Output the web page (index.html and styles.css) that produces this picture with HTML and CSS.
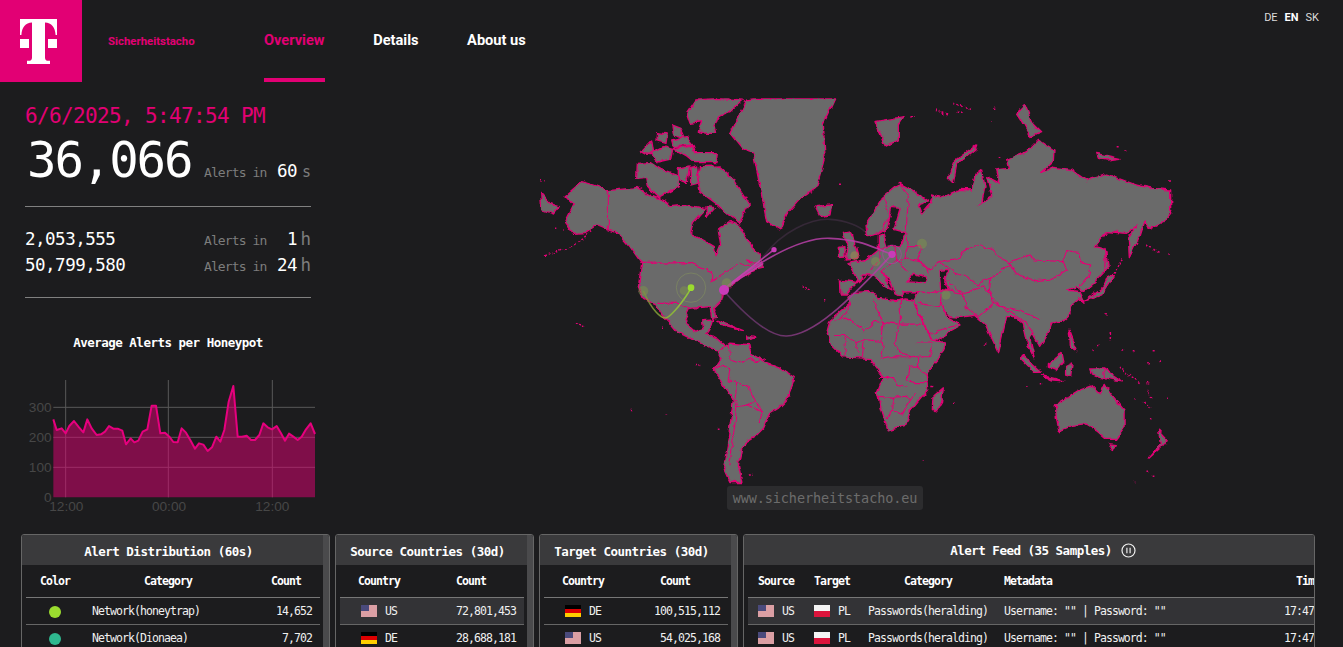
FILE: index.html
```html
<!DOCTYPE html>
<html lang="en">
<head>
    <meta charset="UTF-8">
    <meta name="viewport" content="width=device-width, initial-scale=1.0">
    <title>Sicherheitstacho</title>
    <link rel="stylesheet" href="styles.css">
</head>
<body>

    <svg class="defs" width="0" height="0">
        <symbol id="flag-us" viewBox="0 0 16 12">
            <rect width="16" height="12" fill="#eee"/>
            <path d="M0 1h16M0 3h16M0 5h16M0 7h16M0 9h16M0 11h16" stroke="#c8505a" stroke-width="1"/>
            <rect width="8" height="6" fill="#4a4a7c"/>
        </symbol>
        <symbol id="flag-de" viewBox="0 0 16 12">
            <rect width="16" height="4" fill="#000"/>
            <rect y="4" width="16" height="4" fill="#dd0000"/>
            <rect y="8" width="16" height="4" fill="#ffce00"/>
        </symbol>
        <symbol id="flag-pl" viewBox="0 0 16 12">
            <rect width="16" height="6" fill="#f4f4f4"/>
            <rect y="6" width="16" height="6" fill="#dc143c"/>
        </symbol>
    </svg>

    <header class="topbar">
        <a class="logo">
            <svg width="82" height="82" viewBox="0 0 82 82">
                <path fill="#fff" d="M20 19H57V35H55.6C55.2 27.5 51.5 23 45 22.6V57.5C45 60 46 60.8 48.5 60.8H50V64H27V60.8H28.5C31 60.8 32 60 32 57.5V22.6C25.5 23 21.8 27.5 21.4 35H20Z"/>
                <rect x="20" y="39" width="9" height="9" fill="#fff"/>
                <rect x="48" y="39" width="9" height="9" fill="#fff"/>
            </svg>
        </a>
        <span class="brand">Sicherheitstacho</span>
        <nav class="nav">
            <a class="nav-item active">Overview</a>
            <a class="nav-item">Details</a>
            <a class="nav-item">About us</a>
        </nav>
        <div class="langs"><span>DE</span><span class="on">EN</span><span>SK</span></div>
    </header>

    <main class="main">
        <section class="left">
            <div class="stats">
                <div class="clock">6/6/2025, 5:47:54 PM</div>
                <div class="stat-row big">
                    <span class="num">36,066</span><span class="lbl">Alerts in</span><span class="val">60</span><span class="unit small-unit">s</span>
                </div>
                <hr class="rule">
                <div class="stat-rows">
                    <div class="stat-row">
                        <span class="num">2,053,555</span><span class="lbl">Alerts in</span><span class="val">1</span><span class="unit">h</span>
                    </div>
                    <div class="stat-row">
                        <span class="num">50,799,580</span><span class="lbl">Alerts in</span><span class="val">24</span><span class="unit">h</span>
                    </div>
                </div>
                <hr class="rule">
            </div>
            <h3 class="chart-title">Average Alerts per Honeypot</h3>
            <svg class="chart" width="330" height="155" viewBox="0 135 990 465">
                <g class="grid">
                    <path d="M160 262H945M160 352H945M160 442H945M197 180V532M505 180V532M817 180V532"/>
                </g>
                <path class="area" d="M160 298L170 330 185 325 197 340 208 318 222 303 237 322 250 337 262 298 275 325 290 345 303 343 315 335 327 318 340 326 353 326 367 332 378 373 392 355 403 367 415 362 428 335 442 328 455 257 468 257 481 340 495 338 508 350 520 366 533 367 545 325 558 338 572 362 585 386 597 370 610 374 623 393 636 382 649 350 661 365 673 330 686 245 700 198 713 350 726 350 740 347 753 360 765 360 778 345 790 310 803 322 816 328 830 318 843 340 855 362 867 341 880 350 893 360 905 350 918 328 932 310 945 342V532H160Z"/>
                <path class="line" d="M160 298L170 330 185 325 197 340 208 318 222 303 237 322 250 337 262 298 275 325 290 345 303 343 315 335 327 318 340 326 353 326 367 332 378 373 392 355 403 367 415 362 428 335 442 328 455 257 468 257 481 340 495 338 508 350 520 366 533 367 545 325 558 338 572 362 585 386 597 370 610 374 623 393 636 382 649 350 661 365 673 330 686 245 700 198 713 350 726 350 740 347 753 360 765 360 778 345 790 310 803 322 816 328 830 318 843 340 855 362 867 341 880 350 893 360 905 350 918 328 932 310 945 342"/>
                <g class="ticks">
                    <text x="155" y="277" text-anchor="end">300</text>
                    <text x="155" y="367" text-anchor="end">200</text>
                    <text x="155" y="457" text-anchor="end">100</text>
                    <text x="155" y="547" text-anchor="end">0</text>
                    <text x="199" y="574" text-anchor="middle">12:00</text>
                    <text x="507" y="574" text-anchor="middle">00:00</text>
                    <text x="817" y="574" text-anchor="middle">12:00</text>
                </g>
            </svg>
        </section>

        <section class="map-wrap">
            <svg class="map" width="650" height="420" viewBox="0 0 1950 1260">
                <defs>
                    <clipPath id="map-clip"><rect x="-100" y="25" width="2100" height="1300"/></clipPath>
                    <filter id="rough" filterUnits="userSpaceOnUse" x="-100" y="0" width="2200" height="1300">
                        <feTurbulence type="fractalNoise" baseFrequency=".04" numOctaves="3" seed="4"/>
                        <feDisplacementMap in="SourceGraphic" scale="16" xChannelSelector="R" yChannelSelector="G"/>
                    </filter>
                    <linearGradient id="arc-green" x1="0" x2="1" y1="0" y2="0">
                        <stop offset="0" stop-color="#7f8f3a"/>
                        <stop offset="1" stop-color="#9bdc2f"/>
                    </linearGradient>
                    <linearGradient id="arc-low" x1="0" x2="1" y1="0" y2="0">
                        <stop offset="0" stop-color="#5a3560"/>
                        <stop offset="1" stop-color="#b93fa8"/>
                    </linearGradient>
                </defs>
                <g clip-path="url(#map-clip)">
                    <g filter="url(#rough)">
                        <!-- north america -->
                        <g class="land">
                            <polygon points="105,318 155,275 190,285 235,302 300,295 320,292 365,318 410,335 425,350 470,345 525,355 490,395 482,430 520,450 553,470 558,500 572,465 565,420 585,405 600,395 625,405 668,475 688,495 700,535 660,545 625,570 600,590 580,610 575,630 550,655 558,682 545,685 540,650 480,655 465,685 472,705 495,725 520,715 518,692 548,690 540,715 530,730 565,750 600,782 560,782 530,768 490,750 440,725 420,700 400,680 375,640 340,625 325,590 335,520 300,470 265,430 235,420 200,405 165,428 130,430 105,395 130,345"/>
                            <polygon points="650,30 670,25 915,25 880,100 885,200 860,290 810,325 770,370 750,420 710,395 690,290 670,190 640,180 600,130 640,50"/>
                            <polygon points="470,70 497,30 560,25 640,30 600,65 575,75 555,105 560,130 530,130 505,125 515,95 480,100"/>
                            <polygon points="425,105 450,115 462,142 430,132"/>
                            <polygon points="332,185 365,150 372,195 345,192"/>
                            <polygon points="322,220 362,218 392,238 445,258 445,290 385,322 355,292 350,262 320,265"/>
                            <polygon points="360,190 400,170 428,178 422,208 385,216"/>
                            <polygon points="430,175 490,168 497,188 562,188 558,218 495,218 470,198"/>
                            <polygon points="508,230 568,228 612,268 658,342 628,398 600,378 560,342 510,305 503,262"/>
                            <polygon points="445,235 478,228 472,278 445,268"/>
                            <polygon points="480,232 500,228 505,282 482,288"/>
                            <polygon points="425,150 470,140 490,165 430,170"/>
                            <polygon points="380,128 412,132 408,160 378,152"/>
                            <polygon points="528,350 556,353 530,382"/>
                            <polygon points="32,310 60,340 88,350 70,372 35,360"/>
                            <polygon points="855,350 905,345 900,375 870,380"/>
                            <polygon points="940,430 965,425 985,505 945,510 955,470"/>
                            <polygon points="925,472 945,470 945,498 925,500"/>
                            <polygon points="560,690 640,722 605,714 570,705"/>
                            <polygon points="650,735 680,740 650,748"/>
                            <polygon points="650,510 690,520 680,535"/>
                        </g>
                        <polyline class="border" points="235,302 235,420"/>
                        <polyline class="border" points="335,520 480,518 545,545 545,575 625,520 660,530"/>
                        <polyline class="border" points="385,640 440,640 480,655"/>
                        <path class="isles" d="M45 497L100 480 150 455 185 420M30 272h14M75 415h4M100 420h5M135 697L160 710M395 715h4M815 590L845 605M885 632h4M930 280h6"/>

                        <!-- eurasia, drawn from the second crop -->
                        <g transform="translate(960 0)">
                            <g class="land">
                                <polygon points="-30,612 -32,570 25,578 -6,520 50,508 88,478 88,437 100,432 110,470 150,467 168,428 132,418 150,355 125,352 112,415 85,432 50,440 45,410 65,378 100,320 150,280 195,305 235,335 205,345 215,372 240,342 250,315 275,322 330,298 365,300 375,255 395,240 405,290 395,340 385,345 425,320 410,260 450,280 440,240 475,235 470,210 530,185 565,148 612,180 610,215 575,248 610,232 660,238 710,272 770,252 860,285 910,295 962,300 962,370 945,392 900,415 882,395 868,440 838,503 835,445 862,405 830,430 770,425 735,470 765,478 768,540 745,565 700,605 680,590 650,600 690,605 705,640 690,625 660,650 660,672 640,690 605,700 595,728 569,769 549,733 540,745 554,806 535,770 520,700 495,680 470,680 445,790 404,702 373,676 330,682 300,680 275,650 292,682 325,700 333,708 250,755 205,665 192,632 205,605 158,606 155,622 135,612 125,580 95,545 126,600 105,590 69,555 30,555 35,565 8,592 -8,612"/>
                                <polygon points="75,95 160,80 145,105 145,150 105,170"/>
                                <polygon points="295,265 310,215 380,165 375,180 320,225 310,280"/>
                                <polygon points="500,70 525,45 545,95 575,125 540,140 510,85"/>
                                <polygon points="740,190 810,205 770,210 745,205"/>
                                <polygon points="765,475 775,530 765,545"/>
                                <polygon points="775,555 790,560 755,615 700,635 720,620 760,590"/>
                            </g>
                            <polygon class="sea" points="171,576 190,550 231,562 225,578"/>
                            <polygon class="sea" points="270,545 295,540 285,565 295,600 275,595"/>
                            <polyline class="border" points="265,515 330,505 340,480 385,465 430,480 445,500 480,520 450,550 420,560 385,585 350,560 315,550 290,530 265,515"/>
                            <polyline class="border" points="480,518 540,495 555,510 640,515 650,485 685,490 695,520 725,525 715,560 690,590"/>
                            <polyline class="border" points="640,515 650,540 600,570 560,575 495,550 480,520"/>
                            <polyline class="border" points="420,560 415,610 450,650 510,660 570,690"/>
                            <polyline class="border" points="275,600 340,610 345,650 385,680"/>
                            <polyline class="border" points="205,605 250,610 275,600 270,650"/>
                            <polyline class="border" points="340,610 400,590 420,610 430,640 385,680"/>
                            <polyline class="border" points="295,575 340,610"/>
                            <polyline class="border" points="205,640 270,650"/>
                            <polyline class="border" points="240,730 320,705"/>
                            <polyline class="border" points="430,640 490,670 530,700 549,733"/>
                            <polyline class="border" points="265,515 240,540 200,510 215,470 175,470 170,430"/>
                            <polyline class="border" points="175,470 165,505 225,520 235,550"/>
                            <polyline class="border" points="110,470 90,478 90,510 65,540"/>
                            <polyline class="border" points="135,470 140,510 165,505"/>
                            <polyline class="border" points="95,545 140,510 175,545"/>
                            <polyline class="border" points="25,578 50,555"/>
                            <polyline class="border" points="100,320 120,380 85,432"/>
                            <polyline class="border" points="150,280 175,320 170,400 168,428"/>
                            <path class="isles" d="M255 60L295 75M310 40L360 55M320 70h20M420 95h6M430 55h6M180 80h14M445 200h6M800 170h6M820 180h6M890 465L930 490M955 495h10M960 270V282M820 505L785 560"/>
                        </g>

                        <!-- africa, south america, australia -->
                        <g transform="translate(300 630) scale(1.033)">
                            <g class="land">
                                <polygon points="262,145 290,125 345,130 350,155 400,185 440,200 480,225 455,290 430,315 405,330 385,375 365,395 340,410 325,430 315,480 325,530 290,530 272,490 283,420 300,290 250,215 245,205 262,180"/>
                                <polygon points="570,100 582,55 640,10 632,-10 650,-22 706,-25 720,-5 775,2 800,-3 828,2 828,20 875,115 915,125 895,175 860,215 865,260 835,295 815,320 800,365 750,380 725,300 718,270 735,225 705,185 700,170 620,165 585,130"/>
                                <polygon points="910,255 905,300 890,325 878,315 880,280"/>
                                <polygon points="1235,305 1300,265 1340,250 1365,275 1380,245 1395,270 1435,320 1435,370 1410,405 1385,405 1355,380 1320,360 1280,365 1245,380 1238,340"/>
                                <polygon points="1392,418 1410,420 1403,440"/>
                                <polygon points="1535,378 1560,405 1545,425 1505,462 1540,420"/>
                                <polygon points="1140,160 1195,210 1175,210 1135,170"/>
                                <polygon points="1195,220 1260,235 1220,232"/>
                                <polygon points="1215,185 1255,155 1260,180 1240,205 1215,195"/>
                                <polygon points="1335,200 1375,200 1430,235 1395,230 1375,225 1340,215"/>
                                <polygon points="1265,190 1285,180 1280,220 1265,215"/>
                                <polygon points="1275,85 1300,150 1280,140"/>
                            </g>
                            <polyline class="border" points="285,130 290,170 320,180 350,165 365,180 395,170"/>
                            <polyline class="border" points="245,205 270,190 290,200 285,235 310,240 345,255 365,295 385,325 375,355"/>
                            <polyline class="border" points="310,240 305,290 310,310 340,305 365,295"/>
                            <polyline class="border" points="310,310 300,400 290,480"/>
                            <polyline class="border" points="340,305 385,325"/>
                            <polyline class="border" points="640,10 620,50 590,60"/>
                            <polyline class="border" points="625,50 680,90 710,62 735,65 730,100 735,140 730,170"/>
                            <polyline class="border" points="705,0 735,65 780,70 770,130 790,155 830,165"/>
                            <polyline class="border" points="785,0 785,70 845,70"/>
                            <polyline class="border" points="590,100 625,100 655,125 680,115 730,120"/>
                            <polyline class="border" points="625,100 625,160"/>
                            <polyline class="border" points="655,125 665,155"/>
                            <polyline class="border" points="680,115 675,165"/>
                            <polyline class="border" points="830,125 880,125 870,165 835,165"/>
                            <polyline class="border" points="735,170 750,165 810,165 835,165 835,195 810,195 805,235 830,240 860,240"/>
                            <polyline class="border" points="720,225 765,225 775,245 805,250"/>
                            <polyline class="border" points="718,280 765,282 800,280 815,290 830,270"/>
                            <polyline class="border" points="765,282 763,320 745,345"/>
                            <polyline class="border" points="763,320 790,335 815,290"/>
                            <polyline class="border" points="835,195 860,215"/>
                            <polyline class="border" points="1375,200 1378,225"/>
                            <path class="isles" d="M190 187h14M100 335h5M5 318h5M255 375h5M345 505h14M850 465h3M875 248h10M940 300h4M1150 250h5M1190 243h4M1030 125h5M1395 90V115M1340 145h5M1430 148h5M1460 150h5M1515 150h10M1540 175V185M1505 185h5M1420 195L1480 240M1505 260L1515 285M1490 295L1510 310M1500 240h5M1465 290h4M1560 285h5M1500 497h5M1515 512h5M1465 530h4M1380 40h5M1355 135h5M1510 345h4"/>
                        </g>
                    </g>

                    <!-- attack arcs -->
                    <path class="arc" stroke="#3a2a3c" d="M690 515C750 420 850 385 900 388S990 410 1005 425"/>
                    <path class="arc" stroke="#b93fa8" d="M582 598C650 540 800 440 900 445S1020 470 1086 493"/>
                    <path class="arc" stroke="url(#arc-low)" d="M582 603C650 680 720 740 770 738C850 735 950 640 1086 493"/>
                    <path class="arc" stroke="#c840b0" d="M590 590L732 479"/>
                    <path class="arc" stroke="#c840b0" d="M600 585L700 520"/>
                    <path class="arc" stroke="url(#arc-green)" d="M340 603C365 660 395 690 410 683S465 630 483 593"/>

                    <g class="spots">
                        <circle cx="340" cy="603" r="15" fill="#7c8f4c"/>
                        <circle cx="462" cy="602" r="13" fill="#7c8f4c"/>
                        <circle cx="590" cy="580" r="15" fill="#7c8f4c"/>
                        <circle cx="1176" cy="461" r="15" fill="#7c8f4c"/>
                        <circle cx="1037" cy="515" r="14" fill="#7c8f4c"/>
                        <circle cx="974" cy="497" r="13" fill="#a08a4c"/>
                        <circle cx="1248" cy="615" r="14" fill="#7c8f4c"/>
                    </g>
                    <circle class="ring" cx="483" cy="593" r="44"/>
                    <circle class="ring pink" cx="1086" cy="493" r="28"/>
                    <circle cx="483" cy="593" r="10" fill="#9bdc2f"/>
                    <circle cx="582" cy="600" r="15" fill="#c83cb8"/>
                    <circle cx="732" cy="479" r="8" fill="#c83cb8"/>
                    <circle cx="1086" cy="493" r="11" fill="#c83cb8"/>
                </g>
            </svg>
            <div class="watermark">www.sicherheitstacho.eu</div>
        </section>
    </main>

    <section class="panels">
        <div class="panel p-dist">
            <div class="panel-col">
                <h4 class="panel-head">Alert Distribution (60s)</h4>
                <div class="panel-body">
                    <table class="tbl">
                        <colgroup><col class="c58"><col class="c168"><col class="c68"></colgroup>
                        <tr><th>Color</th><th>Category</th><th>Count</th></tr>
                        <tr><td class="mid"><i class="dot green"></i></td><td class="pad">Network(honeytrap)</td><td class="num-cell">14,652</td></tr>
                        <tr><td class="mid"><i class="dot teal"></i></td><td class="pad">Network(Dionaea)</td><td class="num-cell">7,702</td></tr>
                    </table>
                </div>
            </div>
            <div class="bar"></div>
        </div>

        <div class="panel p-country">
            <div class="panel-col">
                <h4 class="panel-head">Source Countries (30d)</h4>
                <div class="panel-body">
                    <table class="tbl">
                        <colgroup><col class="c78"><col class="c106"></colgroup>
                        <tr><th>Country</th><th>Count</th></tr>
                        <tr class="hot"><td><span class="cc"><svg class="flag"><use href="#flag-us"/></svg>US</span></td><td class="num-cell">72,801,453</td></tr>
                        <tr><td><span class="cc"><svg class="flag"><use href="#flag-de"/></svg>DE</span></td><td class="num-cell">28,688,181</td></tr>
                    </table>
                </div>
            </div>
            <div class="bar"></div>
        </div>

        <div class="panel p-country">
            <div class="panel-col">
                <h4 class="panel-head">Target Countries (30d)</h4>
                <div class="panel-body">
                    <table class="tbl">
                        <colgroup><col class="c78"><col class="c106"></colgroup>
                        <tr><th>Country</th><th>Count</th></tr>
                        <tr><td><span class="cc"><svg class="flag"><use href="#flag-de"/></svg>DE</span></td><td class="num-cell">100,515,112</td></tr>
                        <tr><td><span class="cc"><svg class="flag"><use href="#flag-us"/></svg>US</span></td><td class="num-cell">54,025,168</td></tr>
                    </table>
                </div>
            </div>
            <div class="bar"></div>
        </div>

        <div class="panel p-feed">
            <div class="panel-col">
                <h4 class="panel-head feed-head">Alert Feed (35 Samples)
                    <svg class="pause" width="15" height="15" viewBox="0 0 15 15">
                        <circle cx="7.5" cy="7.5" r="6.5"/>
                        <path d="M5.9 4.8V10.2M9.1 4.8V10.2"/>
                    </svg>
                </h4>
                <div class="panel-body">
                    <table class="tbl feed">
                        <colgroup><col class="c58"><col class="c54"><col class="c136"><col class="c279"><col class="c66"></colgroup>
                        <tr><th class="left ind10">Source</th><th class="left">Target</th><th>Category</th><th class="left">Metadata</th><th>Time</th></tr>
                        <tr class="hot"><td class="ind10"><span class="cc"><svg class="flag"><use href="#flag-us"/></svg>US</span></td><td class="left"><span class="cc"><svg class="flag"><use href="#flag-pl"/></svg>PL</span></td><td class="pad">Passwords(heralding)</td><td class="pad">Username: "" | Password: ""</td><td class="mid">17:47:54</td></tr>
                        <tr><td class="ind10"><span class="cc"><svg class="flag"><use href="#flag-us"/></svg>US</span></td><td class="left"><span class="cc"><svg class="flag"><use href="#flag-pl"/></svg>PL</span></td><td class="pad">Passwords(heralding)</td><td class="pad">Username: "" | Password: ""</td><td class="mid">17:47:54</td></tr>
                    </table>
                </div>
            </div>
        </div>
    </section>

</body>
</html>
```

FILE: styles.css
```css
html, body {
    height: 100%;
}
body {
    margin: 0;
    background-color: #1c1c1e;
    color: #f2f2f2;
    font-family: "DejaVu Sans Mono", "Liberation Mono", monospace;
    overflow: hidden;
}
.defs {
    position: absolute;
}

/* header */
.topbar {
    display: flex;
    align-items: center;
    height: 82px;
}
.logo {
    display: block;
    width: 82px;
    height: 82px;
    background-color: #e20074;
}
.logo svg {
    display: block;
}
.brand {
    margin-left: 26px;
    width: 156px;
    color: #e20074;
    font-family: Roboto, "Liberation Sans", sans-serif;
    font-size: 11.4px;
    font-weight: 700;
}
.nav {
    display: flex;
    gap: 48.6px;
    height: 82px;
}
.nav-item {
    display: flex;
    align-items: center;
    box-sizing: border-box;
    height: 82px;
    padding-top: 2px;
    border-bottom: 4px solid transparent;
    color: #fff;
    font-family: Roboto, "Liberation Sans", sans-serif;
    font-size: 14.6px;
    font-weight: 700;
}
.nav-item.active {
    color: #e20074;
    border-bottom-color: #e20074;
}
.langs {
    display: flex;
    gap: 7px;
    align-self: flex-start;
    margin-left: auto;
    margin-right: 24px;
    padding-top: 11px;
    color: #ddd;
    font-family: Roboto, "Liberation Sans", sans-serif;
    font-size: 11px;
}
.langs .on {
    color: #fff;
    font-weight: 700;
}

/* main row */
.main {
    display: flex;
    height: 452px;
}
.left {
    width: 330px;
    flex: none;
}
.stats {
    width: 286px;
    margin-left: 25px;
}
.clock {
    margin-top: 22px;
    color: #e20074;
    font-size: 21px;
    line-height: 24px;
    letter-spacing: -.64px;
}
.stat-row {
    display: grid;
    grid-template-columns: 179px 60px 33px 14px;
    align-items: baseline;
    height: 26px;
    line-height: 26px;
}
.stat-row .num, .stat-row .val {
    font-size: 17.5px;
    letter-spacing: -.5px;
    color: #fff;
}
.stat-row .lbl {
    font-size: 13px;
    letter-spacing: -.9px;
    color: #7d7d7d;
    white-space: nowrap;
}
.stat-row .val {
    text-align: right;
}
.stat-row .unit {
    font-size: 17.5px;
    text-align: right;
    color: #7d7d7d;
}
.stat-row .small-unit {
    font-size: 15px;
}
.stat-row.big {
    box-sizing: border-box;
    height: 60px;
    padding-top: 5px;
    line-height: 56px;
}
.stat-row.big .num {
    padding-left: 2px;
    font-size: 49px;
    letter-spacing: -2.1px;
}
.rule {
    height: 1px;
    margin: 18px 0 0;
    border: 0;
    background-color: #808080;
}
.stat-rows {
    padding: 19px 0;
}
.stat-rows + .rule {
    margin-top: 0;
}
.chart-title {
    margin: 35px 0 0;
    padding-left: 6px;
    font-size: 12.5px;
    font-weight: 700;
    line-height: 20px;
    letter-spacing: -.5px;
    text-align: center;
    color: #fff;
}
.chart {
    display: block;
    margin-top: 12px;
}
.grid path {
    fill: none;
    stroke: #585858;
    stroke-width: 3;
}
.area {
    fill: #e20074;
    fill-opacity: .5;
}
.line {
    fill: none;
    stroke: #e6007e;
    stroke-width: 6;
    stroke-linejoin: round;
}
.ticks text {
    fill: #474747;
    font-family: "Liberation Sans", sans-serif;
    font-size: 41px;
}

/* map */
.map-wrap {
    position: relative;
    flex: 1;
}
.map {
    display: block;
    margin: 8px 0 0 200px;
}
.map polygon, .map polyline, .map path, .map circle {
    vector-effect: non-scaling-stroke;
}
.land polygon {
    fill: #6a6a6a;
    stroke: #e20074;
    stroke-width: 1.3;
    stroke-linejoin: round;
}
.sea {
    fill: #1c1c1e;
    stroke: #e20074;
    stroke-width: 1.3;
}
.border {
    fill: none;
    stroke: #e20074;
    stroke-width: 1.1;
}
.isles {
    fill: none;
    stroke: #e20074;
    stroke-width: 1.5;
    stroke-dasharray: 2 2;
}
.arc {
    fill: none;
    stroke-width: 1.6;
    stroke-opacity: .85;
}
.spots circle {
    fill-opacity: .55;
}
.ring {
    fill: none;
    stroke: #8a9a5a;
    stroke-width: .8;
    stroke-opacity: .6;
}
.ring.pink {
    stroke: #c83cb8;
}
.watermark {
    position: absolute;
    left: 397px;
    top: 404px;
    width: 196px;
    height: 24px;
    border-radius: 3px;
    background-color: #2c2c2e;
    color: #6c6c6c;
    font-size: 13.5px;
    line-height: 24px;
    letter-spacing: -.1px;
    text-align: center;
}

/* bottom panels */
.panels {
    display: flex;
    gap: 5px;
    height: 113px;
    padding-left: 21px;
}
.panel {
    display: flex;
    box-sizing: border-box;
    height: 140px;
    border: 1px solid #666;
    border-radius: 3px 3px 0 0;
    overflow: hidden;
}
.p-dist { width: 309px; }
.p-country { width: 199px; }
.p-feed { width: 572px; }
.panel-col {
    flex: 1;
    min-width: 0;
}
.bar {
    flex: none;
    width: 6px;
    background-color: #4a4a4c;
}
.panel-head {
    height: 30px;
    margin: 0;
    padding-right: 8px;
    background-color: #3a3a3c;
    font-size: 12.5px;
    font-weight: 700;
    line-height: 33px;
    letter-spacing: -.5px;
    text-align: center;
    color: #fff;
}
.feed-head {
    display: flex;
    justify-content: center;
    align-items: center;
    gap: 9px;
    padding-top: 1px;
    padding-right: 0;
    padding-left: 28px;
    box-sizing: border-box;
    height: 30px;
}
.panel-body {
    padding: 0 4px;
    overflow: hidden;
}
.tbl {
    border-collapse: collapse;
    table-layout: fixed;
    font-size: 11.5px;
    letter-spacing: -.93px;
    color: #f0f0f0;
}
.p-dist .tbl { width: 294px; }
.p-country .tbl { width: 184px; }
.tbl.feed { width: 593px; }
.c54 { width: 54px; }
.c58 { width: 58px; }
.c66 { width: 66px; }
.c68 { width: 68px; }
.c78 { width: 78px; }
.c106 { width: 106px; }
.c136 { width: 136px; }
.c168 { width: 168px; }
.c279 { width: 279px; }
.tbl th {
    height: 32px;
    padding: 0;
    border-bottom: 1px solid #777;
    font-weight: 700;
    color: #fff;
}
.tbl td {
    height: 26px;
    padding: 0;
    border-bottom: 1px solid #666;
    white-space: nowrap;
}
.tbl .left {
    text-align: left;
    padding-left: 8px;
}
.tbl .ind10 {
    text-align: left;
    padding-left: 10px;
}
.tbl .pad {
    padding-left: 8px;
}
.tbl .mid {
    text-align: center;
}
.tbl .num-cell {
    padding-right: 8px;
    text-align: right;
}
.hot td {
    background-color: #333336;
}
.cc {
    display: flex;
    justify-content: center;
    align-items: center;
    gap: 8px;
}
.feed .cc {
    justify-content: flex-start;
}
.flag {
    display: block;
    width: 16px;
    height: 12px;
}
.dot {
    display: inline-block;
    width: 12px;
    height: 12px;
    border-radius: 50%;
    vertical-align: middle;
}
.dot.green { background-color: #9bdc2f; }
.dot.teal { background-color: #2fb88f; }
.pause circle, .pause path {
    fill: none;
    stroke: #eee;
    stroke-width: 1.2;
}
```
